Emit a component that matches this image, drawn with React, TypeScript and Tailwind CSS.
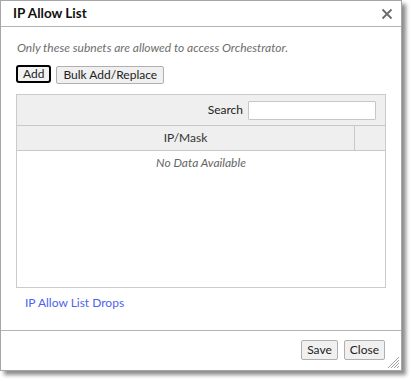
export default function App() {
  return (
    <div className="w-[411px] h-[381px] bg-white font-['Lato',sans-serif] text-[12px] text-[#333]">
      <div className="relative w-[402px] h-[371px] border border-[#a6a6a6] bg-white shadow-[4px_4px_4px_rgba(0,0,0,0.45)] flex flex-col">
        {/* Header */}
        <div className="h-[26px] border-b border-[#b4b4b4] flex items-center justify-between pl-[12px] pr-[8px]">
          <span className="text-[13.5px] font-bold text-[#111] leading-none">IP Allow List</span>
          <svg width="12" height="12" viewBox="0 0 12 12" className="text-[#6b6b6b]">
            <path d="M1.5 1.5 L10.5 10.5 M10.5 1.5 L1.5 10.5" stroke="currentColor" strokeWidth="1.8" />
          </svg>
        </div>

        {/* Body */}
        <div className="flex-1 flex flex-col px-[15px] pt-[13px]">
          <p className="italic text-[#6e6e6e] leading-[16px] ml-[1px]">Only these subnets are allowed to access Orchestrator.</p>
          <div className="flex gap-[5px] mt-[9px]">
            <button className="h-[18px] px-[5px] border-2 border-black rounded-[3px] bg-[#f2f2f2] leading-none text-[#222]">Add</button>
            <button className="h-[18px] mt-[1px] px-[6px] border border-[#b0b0b0] rounded-[2px] bg-[#f0f0f0] leading-none text-[#222]">Bulk Add/Replace</button>
          </div>
          <div className="mt-[10px] h-[194px] border border-[#cbcbcb] flex flex-col">
            <div className="h-[31px] bg-[#efefef] border-b border-[#c8c8c8] flex items-center justify-end pr-[9px] gap-[5px]">
              <span className="text-[#222]">Search</span>
              <div className="w-[128px] h-[19px] border border-[#c6c6c6] bg-white rounded-[1px]" />
            </div>
            <div className="h-[25px] bg-[#efefef] border-b border-[#c8c8c8] flex">
              <div className="flex-1 flex items-center justify-center border-r border-[#c8c8c8] text-[#333]">IP/Mask</div>
              <div className="w-[30px]" />
            </div>
            <div className="text-center italic text-[#666] pt-[3px]">No Data Available</div>
          </div>
          <a className="mt-[7px] ml-[9px] text-[#4b63f0] leading-[16px]">IP Allow List Drops</a>
        </div>

        {/* Footer */}
        <div className="h-[40px] border-t border-[#b4b4b4] flex justify-end items-start pt-[9px] pr-[16px] gap-[6px]">
          <button className="h-[20px] px-[5px] border border-[#b0b0b0] rounded-[2px] bg-[#f0f0f0] leading-none text-[#222]">Save</button>
          <button className="h-[20px] px-[5px] border border-[#b0b0b0] rounded-[2px] bg-[#f0f0f0] leading-none text-[#222]">Close</button>
        </div>

        <svg width="12" height="12" viewBox="0 0 12 12" className="absolute right-[1px] bottom-[1px]">
          <path d="M11 3 L3 11 M11 6 L6 11 M11 9 L9 11 M11 0 L0 11" stroke="#888" strokeWidth="0.8" />
        </svg>
      </div>
    </div>
  );
}
